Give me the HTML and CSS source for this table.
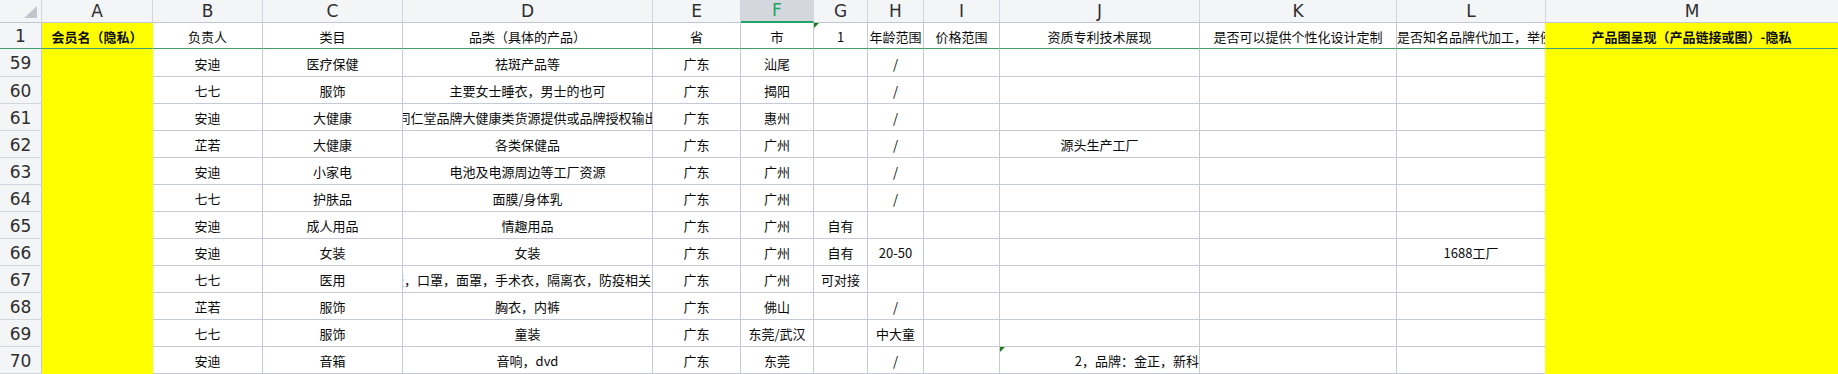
FILE: index.html
```html
<!DOCTYPE html>
<html lang="zh-CN">
<head>
<meta charset="utf-8">
<title>Sheet</title>
<link rel="stylesheet" href="styles.css">
</head>
<body>
<div class="sheet">
  <!-- column header row -->
  <div class="c h corner"><svg class="corner-tri" width="13" height="12" viewBox="0 0 13 12"><polygon points="13,0 13,12 0,12" fill="#c3c6cd"/></svg></div>
  <div class="c h">A</div>
  <div class="c h">B</div>
  <div class="c h">C</div>
  <div class="c h">D</div>
  <div class="c h">E</div>
  <div class="c h sel">F</div>
  <div class="c h">G</div>
  <div class="c h">H</div>
  <div class="c h">I</div>
  <div class="c h">J</div>
  <div class="c h">K</div>
  <div class="c h">L</div>
  <div class="c h last">M</div>

  <!-- row 1 -->
  <div class="c n r1">1</div>
  <div class="c y r1 b">会员名（隐私）</div>
  <div class="c r1">负责人</div>
  <div class="c r1">类目</div>
  <div class="c r1">品类（具体的产品）</div>
  <div class="c r1">省</div>
  <div class="c r1">市</div>
  <div class="c r1 mk">1</div>
  <div class="c r1">年龄范围</div>
  <div class="c r1">价格范围</div>
  <div class="c r1">资质专利技术展现</div>
  <div class="c r1">是否可以提供个性化设计定制</div>
  <div class="c r1 l ly">是否知名品牌代加工，举例说明</div>
  <div class="c y r1 b">产品图呈现（产品链接或图）-隐私</div>

  <!-- row 59 -->
  <div class="c n">59</div>
  <div class="c y"></div>
  <div class="c">安迪</div>
  <div class="c">医疗保健</div>
  <div class="c">祛斑产品等</div>
  <div class="c">广东</div>
  <div class="c">汕尾</div>
  <div class="c"></div>
  <div class="c">/</div>
  <div class="c"></div>
  <div class="c"></div>
  <div class="c"></div>
  <div class="c ly"></div>
  <div class="c y"></div>

  <!-- row 60 -->
  <div class="c n">60</div>
  <div class="c y"></div>
  <div class="c">七七</div>
  <div class="c">服饰</div>
  <div class="c">主要女士睡衣，男士的也可</div>
  <div class="c">广东</div>
  <div class="c">揭阳</div>
  <div class="c"></div>
  <div class="c">/</div>
  <div class="c"></div>
  <div class="c"></div>
  <div class="c"></div>
  <div class="c ly"></div>
  <div class="c y"></div>

  <!-- row 61 -->
  <div class="c n">61</div>
  <div class="c y"></div>
  <div class="c">安迪</div>
  <div class="c">大健康</div>
  <div class="c">同仁堂品牌大健康类货源提供或品牌授权输出</div>
  <div class="c">广东</div>
  <div class="c">惠州</div>
  <div class="c"></div>
  <div class="c">/</div>
  <div class="c"></div>
  <div class="c"></div>
  <div class="c"></div>
  <div class="c ly"></div>
  <div class="c y"></div>

  <!-- row 62 -->
  <div class="c n">62</div>
  <div class="c y"></div>
  <div class="c">芷若</div>
  <div class="c">大健康</div>
  <div class="c">各类保健品</div>
  <div class="c">广东</div>
  <div class="c">广州</div>
  <div class="c"></div>
  <div class="c">/</div>
  <div class="c"></div>
  <div class="c">源头生产工厂</div>
  <div class="c"></div>
  <div class="c ly"></div>
  <div class="c y"></div>

  <!-- row 63 -->
  <div class="c n">63</div>
  <div class="c y"></div>
  <div class="c">安迪</div>
  <div class="c">小家电</div>
  <div class="c">电池及电源周边等工厂资源</div>
  <div class="c">广东</div>
  <div class="c">广州</div>
  <div class="c"></div>
  <div class="c">/</div>
  <div class="c"></div>
  <div class="c"></div>
  <div class="c"></div>
  <div class="c ly"></div>
  <div class="c y"></div>

  <!-- row 64 -->
  <div class="c n">64</div>
  <div class="c y"></div>
  <div class="c">七七</div>
  <div class="c">护肤品</div>
  <div class="c">面膜/身体乳</div>
  <div class="c">广东</div>
  <div class="c">广州</div>
  <div class="c"></div>
  <div class="c">/</div>
  <div class="c"></div>
  <div class="c"></div>
  <div class="c"></div>
  <div class="c ly"></div>
  <div class="c y"></div>

  <!-- row 65 -->
  <div class="c n">65</div>
  <div class="c y"></div>
  <div class="c">安迪</div>
  <div class="c">成人用品</div>
  <div class="c">情趣用品</div>
  <div class="c">广东</div>
  <div class="c">广州</div>
  <div class="c">自有</div>
  <div class="c"></div>
  <div class="c"></div>
  <div class="c"></div>
  <div class="c"></div>
  <div class="c ly"></div>
  <div class="c y"></div>

  <!-- row 66 -->
  <div class="c n">66</div>
  <div class="c y"></div>
  <div class="c">安迪</div>
  <div class="c">女装</div>
  <div class="c">女装</div>
  <div class="c">广东</div>
  <div class="c">广州</div>
  <div class="c">自有</div>
  <div class="c">20-50</div>
  <div class="c"></div>
  <div class="c"></div>
  <div class="c"></div>
  <div class="c ly">1688工厂</div>
  <div class="c y"></div>

  <!-- row 67 -->
  <div class="c n">67</div>
  <div class="c y"></div>
  <div class="c">七七</div>
  <div class="c">医用</div>
  <div class="c">服，口罩，面罩，手术衣，隔离衣，防疫相关品</div>
  <div class="c">广东</div>
  <div class="c">广州</div>
  <div class="c">可对接</div>
  <div class="c"></div>
  <div class="c"></div>
  <div class="c"></div>
  <div class="c"></div>
  <div class="c ly"></div>
  <div class="c y"></div>

  <!-- row 68 -->
  <div class="c n">68</div>
  <div class="c y"></div>
  <div class="c">芷若</div>
  <div class="c">服饰</div>
  <div class="c">胸衣，内裤</div>
  <div class="c">广东</div>
  <div class="c">佛山</div>
  <div class="c"></div>
  <div class="c">/</div>
  <div class="c"></div>
  <div class="c"></div>
  <div class="c"></div>
  <div class="c ly"></div>
  <div class="c y"></div>

  <!-- row 69 -->
  <div class="c n">69</div>
  <div class="c y"></div>
  <div class="c">七七</div>
  <div class="c">服饰</div>
  <div class="c">童装</div>
  <div class="c">广东</div>
  <div class="c">东莞/武汉</div>
  <div class="c"></div>
  <div class="c">中大童</div>
  <div class="c"></div>
  <div class="c"></div>
  <div class="c"></div>
  <div class="c ly"></div>
  <div class="c y"></div>

  <!-- row 70 -->
  <div class="c n">70</div>
  <div class="c y"></div>
  <div class="c">安迪</div>
  <div class="c">音箱</div>
  <div class="c">音响，dvd</div>
  <div class="c">广东</div>
  <div class="c">东莞</div>
  <div class="c"></div>
  <div class="c">/</div>
  <div class="c"></div>
  <div class="c r mk">2，品牌：金正，新科</div>
  <div class="c"></div>
  <div class="c ly"></div>
  <div class="c y"></div>
</div>
</body>
</html>
```

FILE: styles.css
```css
html, body {
  margin: 0;
  padding: 0;
  background: #ffffff;
  overflow: hidden;
}

.sheet {
  display: grid;
  grid-template-columns: 42px 111px 110px 140px 250px 88px 73px 54px 56px 76px 200px 197px 149px 292px;
  grid-template-rows: 23px 26px 28px repeat(11, 27px);
  width: 1838px;
  height: 374px;
  font-family: "Noto Sans CJK SC", "Noto Sans", sans-serif;
  font-size: 13px;
  color: #0a0a0a;
}

.c {
  box-sizing: border-box;
  border-right: 1px solid #c5cad8;
  border-bottom: 1px solid #c5cad8;
  display: flex;
  align-items: center;
  justify-content: center;
  white-space: nowrap;
  overflow: hidden;
  padding-top: 1px;
  line-height: 1;
  position: relative;
}

/* column header row */
.h {
  background: #f4f5f7;
  font-family: "DejaVu Sans", sans-serif;
  font-size: 17px;
  color: #2e2e2e;
  border-bottom-color: #c2c6d2;
  border-right-color: #d2d5de;
  padding-top: 0;
}

.h.last {
  border-right: none;
}

.h.sel {
  background: #d4d7dd;
  color: #21a366;
  border-bottom: 2px solid #21a366;
}

.corner {
  justify-content: flex-end;
  align-items: flex-end;
  padding: 0 4px 4px 0;
}

.corner-tri {
  display: block;
}

/* row numbers */
.n {
  background: #f4f5f7;
  font-family: "DejaVu Sans", sans-serif;
  font-size: 17px;
  color: #2e2e2e;
  border-right-color: #c2c6d2;
  border-bottom-color: #d2d5de;
  padding-top: 2px;
}

/* yellow filled cells */
.y {
  background: #ffff00;
  border-right-color: #ffff00;
  border-bottom-color: #ffff00;
}

/* L column borders against the yellow M column */
.ly {
  border-right-color: #ffff00;
}

/* frozen row 1 */
.r1 {
  border-bottom-color: #3fa06b;
}

.b {
  font-weight: 700;
}

.l {
  justify-content: flex-start;
}

.r {
  justify-content: flex-end;
}

/* small green comment/format marker in the top-left corner */
.mk::before {
  content: "";
  position: absolute;
  top: 0;
  left: 0;
  width: 0;
  height: 0;
  border-top: 5px solid #1c7d1c;
  border-right: 5px solid transparent;
}
```
